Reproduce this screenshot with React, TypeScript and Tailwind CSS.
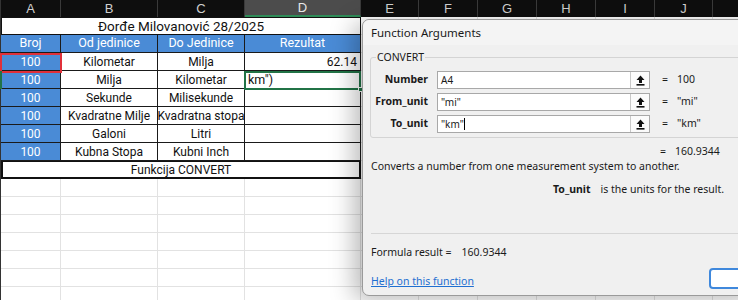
import React from "react";

const COLS = [60, 97, 87, 116, 58, 59, 59, 59, 59, 58, 90];
const LETTERS = ["A", "B", "C", "D", "E", "F", "G", "H", "I", "J", "K"];

const BLUE = "bg-[#4a8bd6]";
const CELLFONT = "Roboto, 'Liberation Sans', sans-serif";

function HeaderRow() {
  return (
    <div className="flex h-[17px] bg-[#0e0e0e]" style={{ fontFamily: "'Liberation Sans', Arial, sans-serif" }}>
      {COLS.map((w, i) => (
        <div
          key={i}
          style={{ width: w }}
          className={`shrink-0 flex items-center justify-center border-r border-[#3a3a3a] text-[13px] ${
            i === 3 ? "bg-[#4c4c4c] text-[#e8e8e8] border-b-2 border-b-[#2e8b57]" : "text-[#d0d0d0]"
          }`}
        >
          {i < 10 ? LETTERS[i] : ""}
        </div>
      ))}
    </div>
  );
}

function EmptyCells({ from }: { from: number }) {
  return (
    <>
      {COLS.slice(from).map((w, i) => (
        <div key={i} style={{ width: w }} className="shrink-0 border-r border-b border-[#e2e2e2]" />
      ))}
    </>
  );
}

type Cell = { t: string; blue?: boolean; align?: string; cls?: string };

function DataRow({ cells }: { cells: Cell[] }) {
  return (
    <div className="flex h-[18px]">
      {cells.map((c, i) => (
        <div
          key={i}
          style={{ width: COLS[i] }}
          className={`shrink-0 flex items-center whitespace-nowrap overflow-hidden border-r border-b border-[#1a1a1a] text-[12px] leading-none ${
            c.blue ? `${BLUE} text-white` : "bg-white text-[#111]"
          } ${c.align ?? "justify-center"} ${c.cls ?? ""}`}
        >
          {c.t}
        </div>
      ))}
      <EmptyCells from={4} />
    </div>
  );
}

export default function App() {
  const rows: Cell[][] = [
    [{ t: "100", blue: true }, { t: "Kilometar" }, { t: "Milja" }, { t: "62.14", align: "justify-end pr-[3px]" }],
    [{ t: "100", blue: true }, { t: "Milja" }, { t: "Kilometar" }, { t: "" }],
    [{ t: "100", blue: true }, { t: "Sekunde" }, { t: "Milisekunde" }, { t: "" }],
    [{ t: "100", blue: true }, { t: "Kvadratne Milje" }, { t: "Kvadratna stopa" }, { t: "" }],
    [{ t: "100", blue: true }, { t: "Galoni" }, { t: "Litri" }, { t: "" }],
    [{ t: "100", blue: true }, { t: "Kubna Stopa" }, { t: "Kubni Inch" }, { t: "" }],
  ];

  return (
    <div className="relative w-[738px] h-[300px] overflow-hidden bg-white" style={{ fontFamily: CELLFONT }}>
      <div className="flex flex-col border-l border-[#333]">
        <HeaderRow />
        {/* title row */}
        <div className="flex h-[18px]">
          <div className="w-[360px] shrink-0 flex items-center justify-center whitespace-nowrap border-[1.5px] border-[#111] bg-white text-[13.5px] text-[#111]">
            Đorđe Milovanović 28/2025
          </div>
          <EmptyCells from={4} />
        </div>
        {/* header */}
        <div className="flex h-[18px]">
          {["Broj", "Od jedinice", "Do Jedinice", "Rezultat"].map((t, i) => (
            <div
              key={i}
              style={{ width: COLS[i] }}
              className={`shrink-0 flex items-center justify-center whitespace-nowrap ${BLUE} text-white text-[12.5px] border-r border-b border-[#1a1a1a]`}
            >
              {t}
            </div>
          ))}
          <EmptyCells from={4} />
        </div>
        {rows.map((r, i) => (
          <DataRow key={i} cells={r} />
        ))}
        {/* Funkcija row */}
        <div className="flex h-[18px]">
          <div className="w-[360px] shrink-0 flex items-center justify-center whitespace-nowrap border-2 border-t border-[#111] bg-white text-[12px] text-[#111]">
            Funkcija CONVERT
          </div>
          <EmptyCells from={4} />
        </div>
        {Array.from({ length: 7 }).map((_, i) => (
          <div key={i} className="flex h-[18px]">
            <EmptyCells from={0} />
          </div>
        ))}
      </div>

      {/* active cell overlays */}
      <div className="absolute left-[0px] top-[53px] w-[62px] h-[20px] border-2 border-[#e0303a]" />
      <div className="absolute left-[244px] top-[71px] w-[117px] h-[19px] border-2 border-[#217346] bg-white flex items-center pl-[2px] text-[12.5px] text-[#111]">
        km")
      </div>
      <div className="absolute left-[358px] top-[87px] w-[5px] h-[5px] bg-[#217346] border border-white" />
      <div className="absolute left-0 top-[71px] w-[2px] h-[18px] bg-[#217346]" />

      {/* Dialog */}
      <div
        className="absolute left-[362px] top-[19px] w-[400px] h-[277px] rounded-l-[7px] border border-[#9a9a9a] bg-[#f0f0f0] shadow-[-8px_4px_24px_rgba(0,0,0,0.28)] text-[#1a1a1a]"
        style={{ fontFamily: "'Noto Sans', 'Open Sans', sans-serif" }}
      >
        <div className="h-[25px] flex items-center pl-[8px] bg-[#f4f4f4] rounded-tl-[7px] text-[11.5px]">
          Function Arguments
        </div>
        <div className="relative ml-[7px] mt-[12px] h-[81px] border border-[#d4d4d4] rounded-[3px]">
          <div className="absolute left-[5px] -top-[8px] px-[1px] bg-[#f0f0f0] text-[10.5px] leading-[14px]">CONVERT</div>
          <div className="flex flex-col gap-[4px] pt-[13px]">
            {[
              ["Number", "A4", "100"],
              ["From_unit", '"mi"', '"mi"'],
              ["To_unit", '"km"', '"km"'],
            ].map(([l, v, r], i) => (
              <div key={i} className="flex items-center h-[18px]">
                <div className="w-[57px] text-right font-bold text-[10.5px]">{l}</div>
                <div className="ml-[9px] w-[213px] h-[18px] flex border border-[#a8a8a8] bg-white">
                  <div className="flex-1 flex items-center pl-[3px] text-[10px]">
                    {v}
                    {i === 2 && <span className="w-px h-[12px] bg-black" />}
                  </div>
                  <div className="w-[19px] flex items-center justify-center border-l border-[#c8c8c8] bg-[#fbfbfb]">
                    <svg width="9" height="11" viewBox="0 0 9 11">
                      <path d="M4.5 0.5 L8.5 5 H6 V8 H3 V5 H0.5 Z" fill="#111" />
                      <rect x="0.5" y="9" width="8" height="1.6" fill="#111" />
                    </svg>
                  </div>
                </div>
                <div className="ml-[12px] text-[10.5px]">=</div>
                <div className="ml-[9px] text-[10.5px]">{r}</div>
              </div>
            ))}
          </div>
        </div>
        <div className="flex items-center h-[14px] mt-[7px] pl-[297px] text-[10.5px]">
          <span>=</span>
          <span className="ml-[9px]">160.9344</span>
        </div>
        <div className="pl-[8px] text-[10.5px] leading-[14px]">
          Converts a number from one measurement system to another.
        </div>
        <div className="mt-[9px] pl-[190px] text-[10.5px] leading-[14px]">
          <span className="font-bold">To_unit</span>
          <span className="ml-[10px]">is the units for the result.</span>
        </div>
        <div className="ml-[8px] mt-[37px] border-t border-[#d6d6d6]" />
        <div className="mt-[11px] pl-[8px] text-[10.5px] leading-[14px]">
          Formula result =<span className="ml-[10px]">160.9344</span>
        </div>
        <div className="mt-[15px] pl-[8px] text-[10.5px] leading-[14px]">
          <span className="text-[#1f6fd1] underline">Help on this function</span>
        </div>
        <div className="absolute left-[346px] top-[248px] w-[60px] h-[21px] rounded-[4px] border-2 border-[#3f88dc] bg-white" />
      </div>
    </div>
  );
}
